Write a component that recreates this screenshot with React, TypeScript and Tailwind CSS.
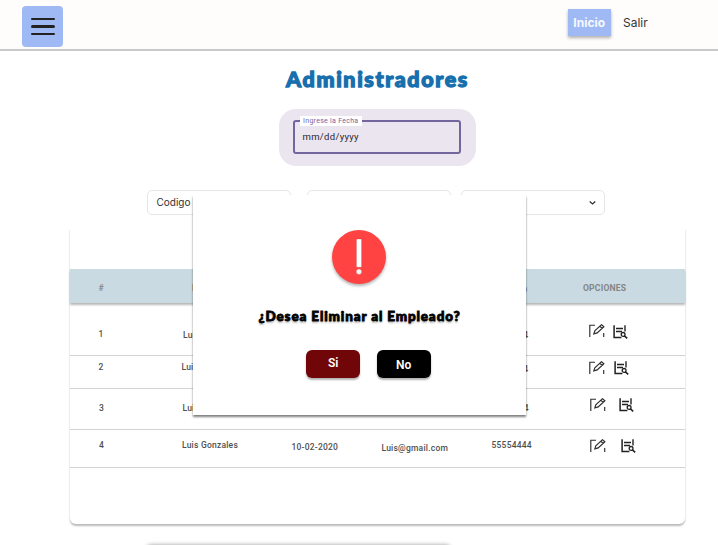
import type { ReactNode } from "react";

type Employee = {
  id: number;
  height: string;
  idPos: string;
  name: string;
  namePos: string;
  phonePos: string;
  searchPos: string;
  iconsPos: string;
};

const employees: Employee[] = [
  { id: 1, height: "h-[53px]", idPos: "pt-[25px] pl-[28.5px]", name: "Luis Gonzales", namePos: "pt-[26px] pl-[113.5px]", phonePos: "pt-[26px] -ml-[3px] mr-[3px]", iconsPos: "pt-[21px]", searchPos: "ml-[8px] mt-[1.5px]" },
  { id: 2, height: "h-[33px]", idPos: "pt-[5px] pl-[28.5px]", name: "Luis Gonzales", namePos: "pt-[5px] pl-[112px]", phonePos: "pt-[7px] -ml-[3px] mr-[3px]", iconsPos: "pt-[5px]", searchPos: "ml-[9px]" },
  { id: 3, height: "h-[41px]", idPos: "pt-[13px] pl-[29px]", name: "Luis Gonzales", namePos: "pt-[13px] pl-[112.5px]", phonePos: "pt-[13px] -ml-[3px] mr-[3px]", iconsPos: "pt-[9px]", searchPos: "ml-[13px]" },
  { id: 4, height: "h-[38px]", idPos: "pt-[9.5px] pl-[29px]", name: "Luis Gonzales", namePos: "pt-[9.5px] pl-[112px]", phonePos: "pt-[9.5px]", iconsPos: "pt-[9.5px]", searchPos: "ml-[15.5px]" },
];

function EditIcon() {
  return (
    <svg width="16" height="14" viewBox="0 0 16 14" fill="none" stroke="#2d2d2d" strokeWidth="1.15" className="shrink-0">
      <path d="M.8 13V1.2H6" />
      <path d="M4.8 9.9L5.8 6.9L12.5.7L14.9 2.8L8.2 8.9Z M10.8 2.3L13.2 4.4" />
      <path d="M14.7 9V13" />
    </svg>
  );
}

function SearchDocIcon({ className }: { className: string }) {
  return (
    <svg width="15" height="14" viewBox="0 0 15 14" fill="none" stroke="#222" className={"shrink-0 " + className}>
      <path d="M1.1 .3V13.3M.4 12.5H8.4" strokeWidth="1.5" />
      <path d="M12 .3V6.6" strokeWidth="1.4" />
      <path d="M3 3.4H10M3 6.4H9" strokeWidth="1.5" />
      <circle cx="10.1" cy="9.4" r="1.9" strokeWidth="1.3" />
      <path d="M11.4 10.8L14.2 13.4" strokeWidth="1.6" />
    </svg>
  );
}

function Select({ label, className }: { label: string; className?: string }) {
  return (
    <div className={"flex h-[25px] w-[144.5px] items-center justify-between rounded-[5px] border border-[#e6e6e6] bg-white pr-[7px] pl-[9px] font-[Inter,sans-serif] text-[10px] text-[#333] " + (className ?? "")}>
      <span>{label}</span>
      <svg width="9" height="6" viewBox="0 0 9 6" fill="none" stroke="#333" strokeWidth="1.3">
        <path d="M1.7 1.5L4.5 4L7.3 1.5" />
      </svg>
    </div>
  );
}

function DialogButton({ children, className }: { children: ReactNode; className: string }) {
  return (
    <button className={"flex h-[28px] w-[54px] justify-center rounded-[6px] font-[Roboto,sans-serif] text-[12px] leading-[15px] font-semibold text-white shadow-[0_2px_2px_rgba(0,0,0,0.3)] " + className}>
      {children}
    </button>
  );
}

function Header() {
  return (
    <header className="flex h-[50.5px] shrink-0 items-start border-b-[2.5px] border-[#c9c9c9] bg-[#fffdfb]">
      <button className="mt-[6px] ml-[22px] flex h-[41px] w-[41px] flex-col items-center gap-[5px] rounded-[4px] bg-[#9eb9f3] pt-[12px]">
        <span className="h-[2.3px] w-[24px] rounded-full bg-[#222]" />
        <span className="h-[2.3px] w-[24px] rounded-full bg-[#222]" />
        <span className="h-[2.3px] w-[24px] rounded-full bg-[#222]" />
      </button>
      <nav className="mt-[9px] ml-auto flex h-[27px] items-center pr-[70px] font-[Inter,sans-serif] text-[12px]">
        <a className="flex h-[27px] w-[43.5px] items-center justify-center bg-[#9eb9f3] font-bold text-white/90 shadow-[0_2px_3px_rgba(0,0,0,0.3)]">Inicio</a>
        <a className="ml-[12px] w-[25px] text-[#333]">Salir</a>
      </nav>
    </header>
  );
}

function Dialog() {
  return (
    <section className="absolute top-[195px] left-[193px] flex h-[220px] w-[333px] flex-col items-center bg-white shadow-[0_2px_2px_rgba(0,0,0,0.5)]">
      <svg width="62" height="62" viewBox="0 0 62 62" className="mt-[31px] ml-[-1px] overflow-visible drop-shadow-[0_2px_1.5px_rgba(0,0,0,0.3)]">
        <circle cx="31" cy="31" r="27" fill="#ff4242" />
        <rect x="28.4" y="13" width="5.2" height="28.3" rx=".8" fill="#fff" stroke="#a33" strokeOpacity=".4" strokeWidth=".7" />
        <circle cx="31" cy="45.7" r="2.7" fill="#f5f5f5" stroke="#a33" strokeOpacity=".4" strokeWidth=".5" />
      </svg>
      <h2 className="mt-[18px] h-[20px] whitespace-nowrap font-[Lato,sans-serif] text-[13.5px] leading-[20px] font-black tracking-[0.85px] text-black [-webkit-text-stroke:0.8px_black] [text-shadow:0_2px_2px_rgba(0,0,0,0.3)]">
        ¿Desea Eliminar al Empleado?
      </h2>
      <div className="mt-[23.5px] flex gap-[16.5px] pl-[18px]">
        <DialogButton className="bg-[#700608] pt-[6px]">Si</DialogButton>
        <DialogButton className="bg-black pt-[8px]">No</DialogButton>
      </div>
    </section>
  );
}

export default function App() {
  return (
    <div className="relative flex h-[545px] w-[718px] flex-col overflow-hidden bg-white">
      <Header />
      <main className="flex flex-1 flex-col">
        <h1 className="mt-[14.5px] h-[28px] pl-[37px] text-center font-[Lato,sans-serif] text-[21.5px] leading-[28px] font-black tracking-[1.6px] text-[#176fae] [-webkit-text-stroke:1.3px_#176fae]">
          Administradores
        </h1>
        <div className="mt-[16px] ml-[278.5px] flex h-[57px] w-[197px] rounded-[17px] bg-[#ebe5f0] pt-[11px] pl-[14px]">
          <fieldset className="relative h-[34px] w-[168.5px] rounded-[3px] border-2 border-[#75659f] pt-[8px] pl-[8px] font-[Roboto,sans-serif]">
            <span className="absolute top-[-6px] left-[5.5px] h-[10px] w-[61.5px] bg-white text-center text-[7px] leading-[10px] tracking-[0.28px] text-[#75659f]">Ingrese la Fecha</span>
            <span className="block text-[9.5px] leading-[13px] tracking-[0.32px] text-[#29262d]">mm/dd/yyyy</span>
          </fieldset>
        </div>
        <div className="mt-[24px] flex pl-[146.5px]">
          <Select label="Codigo" />
          <Select label="" className="ml-[15.5px]" />
          <Select label="" className="ml-[9.5px]" />
        </div>
        <section className="mt-[13px] ml-[70px] h-[296px] w-[615px] shrink-0 rounded-b-[6px] bg-white font-[Roboto,sans-serif] text-[8.5px] leading-[12px] font-medium text-[#505050] shadow-[0_2px_2px_rgba(0,0,0,0.27)]">
          <div className="h-[41px]" />
          <div className="flex h-[33.5px] bg-[#c9dae3] pt-[13px] text-[8.6px] font-bold text-[#858585] shadow-[0_2px_2px_rgba(0,0,0,0.28)]">
            <span className="w-[122px] pl-[28.5px] font-medium">#</span>
            <span className="w-[99px]">NOMBRE</span>
            <span className="w-[90px]">FECHA</span>
            <span className="w-[104px]">CORREO</span>
            <span className="w-[98px] pt-[2px]">TELEFONO</span>
            <span className="tracking-[0.2px]">OPCIONES</span>
          </div>
          {employees.map((e) => (
            <div key={e.id} className={"flex border-b border-[#d3d3d3] tracking-[0.22px] " + e.height}>
              <div className={"w-0 " + e.idPos}>{e.id}</div>
              <div className="flex w-[192.5px] shrink-0">
                <span className={"-ml-[29px] whitespace-nowrap " + e.namePos}>{e.name}</span>
              </div>
              <div className="w-[90px] shrink-0 pt-[11px]">10-02-2020</div>
              <div className="w-[110px] shrink-0 pt-[12px]">Luis@gmail.com</div>
              <div className={"w-[98px] shrink-0 " + e.phonePos}>55554444</div>
              <div className={"flex items-start " + e.iconsPos}>
                <EditIcon />
                <SearchDocIcon className={e.searchPos} />
              </div>
            </div>
          ))}
        </section>
        <div className="mt-[21px] ml-[147px] h-[40px] w-[303px] shrink-0 rounded-[4px] bg-white shadow-[0_0_4px_rgba(0,0,0,0.4)]" />
      </main>
      <Dialog />
    </div>
  );
}
